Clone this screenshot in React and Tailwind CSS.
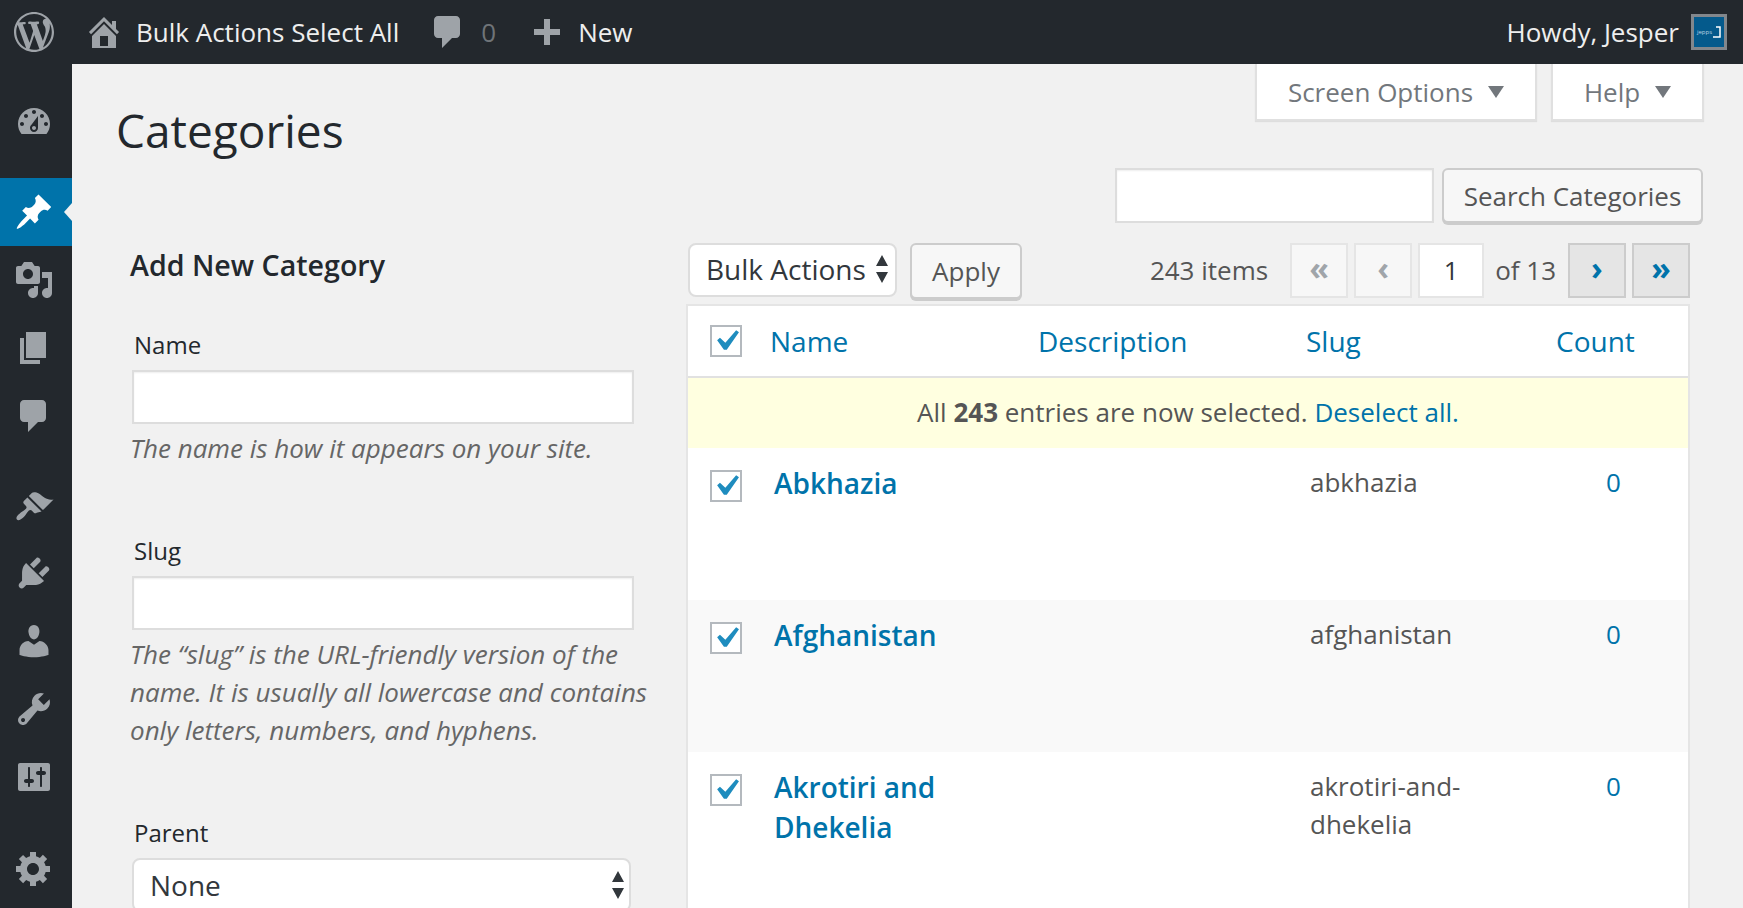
import React from 'react';

// dashicons paths, 20x20 viewBox
const P = {
  wp: 'M20 10c0-5.51-4.49-10-10-10C4.48 0 0 4.490 0 10c0 5.520 4.480 10 10 10 5.510 0 10-4.480 10-10zM7.780 15.370L4.370 6.220c.550-.020 1.170-.080 1.170-.080.500-.060.440-1.130-.060-1.110 0 0-1.450.110-2.370.110-.180 0-.370 0-.580-.010C4.120 2.690 6.890 1.040 10 1.040c2.320 0 4.430.870 6.030 2.340-.680-.110-1.650.390-1.650 1.580 0 .740.450 1.360.900 2.100.350.610.550 1.360.550 2.460 0 1.490-1.400 5-1.400 5l-3.030-8.370c.540-.020.820-.170.820-.170.500-.050.440-1.250-.060-1.220 0 0-1.440.120-2.380.120-.870 0-2.330-.120-2.330-.120-.500-.030-.560 1.200-.060 1.220l.920.080 1.260 3.410zM17.410 10c.240-.640.740-1.870.430-4.250.700 1.290 1.050 2.710 1.050 4.250 0 3.290-1.730 6.240-4.400 7.780.970-2.590 1.940-5.200 2.920-7.780zM6.100 18.090C3.120 16.650 1.110 13.530 1.110 10c0-1.300.230-2.480.720-3.590C3.250 10.300 4.670 14.200 6.100 18.090zm4.030-6.630l2.580 6.980c-.860.290-1.740.450-2.710.450-.790 0-1.570-.110-2.290-.330.810-2.380 1.620-4.740 2.420-7.100z',
  home: 'M16 8.500l1.530 1.530-1.060 1.060L10 4.620l-6.470 6.470-1.060-1.060L10 2.500l4 4v-2h2v4zm-6-2.460l6 5.990V18H4v-5.970zM12 17v-5H8v5h4z',
  comment: 'M5 2h9c1.100 0 2 .900 2 2v7c0 1.100-.900 2-2 2h-2l-5 5v-5H5c-1.100 0-2-.900-2-2V4c0-1.100.900-2 2-2z',
  plus: 'M16.500 8.500v3h-5v5h-3v-5h-5v-3h5v-5h3v5z',
  dashboard: 'M3.760 16h12.480c1.100-1.370 1.760-3.110 1.760-5 0-4.420-3.580-8-8-8s-8 3.580-8 8c0 1.890.660 3.630 1.760 5zM10 4c.550 0 1 .450 1 1s-.450 1-1 1-1-.450-1-1 .450-1 1-1zM6 6c.550 0 1 .450 1 1s-.450 1-1 1-1-.450-1-1 .450-1 1-1zm8 0c.550 0 1 .450 1 1s-.450 1-1 1-1-.450-1-1 .450-1 1-1zm-5.370 5.550L12 7v6c0 1.100-.900 2-2 2s-2-.900-2-2c0-.570.240-1.080.630-1.450zM4 10c.550 0 1 .450 1 1s-.450 1-1 1-1-.450-1-1 .450-1 1-1zm12 0c.550 0 1 .450 1 1s-.450 1-1 1-1-.450-1-1 .450-1 1-1zm-5 3c0-.550-.450-1-1-1s-1 .450-1 1 .450 1 1 1 1-.450 1-1z',
  pin: 'M10.440 3.020l1.820-1.820 6.360 6.350-1.830 1.820c-1.050-.680-2.480-.570-3.410.360l-.750.750c-.920.930-1.040 2.350-.350 3.410l-1.830 1.820-2.410-2.410-2.800 2.790c-.420.420-3.380 2.710-3.800 2.290s1.860-3.390 2.280-3.810l2.790-2.790L4.100 9.360l1.830-1.820c1.050.690 2.480.570 3.400-.360l.750-.750c.930-.920 1.050-2.350.360-3.410z',
  media: 'M13 11V4c0-.550-.450-1-1-1h-1.670L9 1H5L3.670 3H2c-.550 0-1 .450-1 1v7c0 .550.450 1 1 1h10c.550 0 1-.450 1-1zM7 4.500c1.380 0 2.500 1.120 2.500 2.500S8.380 9.500 7 9.500 4.500 8.380 4.500 7 5.620 4.500 7 4.500zM14 6h5v10.500c0 1.380-1.120 2.500-2.500 2.500S14 17.880 14 16.500s1.120-2.500 2.500-2.500c.170 0 .340.020.500.050V9h-3V6zm-4 8.050V13h2v3.500c0 1.380-1.120 2.500-2.500 2.500S7 17.880 7 16.500 8.120 14 9.500 14c.170 0 .340.020.500.050z',
  page: 'M6 15V2h10v13H6zm-1 1h8v2H3V5h2v11z',
  brush: 'M14.480 11.060L7.410 3.990l1.500-1.500c.500-.560 2.300-.470 3.510.320 1.210.800 1.430 1.280 2.910 2.100 1.180.640 2.450 1.260 4.450.850zm-.710.710L6.700 4.700 4.930 6.470c-.390.390-.390 1.020 0 1.410l1.060 1.060c.390.390.390 1.030 0 1.420-.600.600-1.430 1.110-2.210 1.690-.350.260-.700.530-1.010.840C1.430 13.710.840 15.180 1.470 15.810c.630.630 2.100.040 3.450-1.310.310-.310.580-.660.840-1.010.580-.780 1.090-1.610 1.690-2.210.390-.390 1.030-.390 1.420 0l1.060 1.060c.390.390 1.020.390 1.410 0z',
  plug: 'M13.110 4.360L9.870 7.600 8 5.730l3.240-3.240c.350-.340 1.050-.200 1.560.320.520.510.660 1.210.310 1.550zm-8 1.770l.910-1.120 9.010 9.010-1.190.840c-.710.710-2.630 1.160-3.820 1.160H6.140L4.900 17.260c-.590.590-1.540.590-2.120 0-.590-.580-.590-1.530 0-2.120l1.240-1.240v-3.880c0-1.130.400-3.190 1.090-3.890zm7.260 3.970l3.240-3.240c.340-.350 1.040-.210 1.550.310.520.510.660 1.210.310 1.550l-3.240 3.250z',
  user: 'M10 9.250c-2.270 0-2.730-3.440-2.730-3.440C7 4.020 7.820 2 9.970 2c2.160 0 2.980 2.020 2.710 3.810 0 0-.410 3.440-2.680 3.440zm0 2.570L12.720 10c2.390 0 4.520 2.330 4.520 4.530v2.490s-3.650 1.130-7.240 1.130c-3.650 0-7.240-1.130-7.240-1.130v-2.490c0-2.250 1.940-4.480 4.470-4.480z',
  wrench: 'M16.680 9.770c-1.340 1.340-3.300 1.670-4.950.990l-5.410 6.520c-.990.990-2.590.990-3.580 0s-.990-2.590 0-3.570l6.520-5.420c-.680-1.650-.350-3.610.990-4.950 1.280-1.280 3.120-1.620 4.720-1.060l-2.890 2.890 2.820 2.820 2.860-2.870c.530 1.580.180 3.390-1.080 4.650zM3.810 16.210c.400.390 1.040.390 1.430 0 .400-.400.400-1.040 0-1.430-.390-.400-1.030-.400-1.430 0-.390.390-.390 1.030 0 1.430z',
  sliders: 'M18 16V4c0-.550-.450-1-1-1H3c-.550 0-1 .450-1 1v12c0 .550.450 1 1 1h14c.550 0 1-.450 1-1zM8 11h1c.550 0 1 .450 1 1s-.450 1-1 1H8v1.500c0 .280-.220.500-.500.500s-.500-.220-.500-.500V13H6c-.550 0-1-.450-1-1s.450-1 1-1h1V5.500c0-.280.220-.500.500-.500s.500.220.500.500V11zm5-2h-1c-.550 0-1-.450-1-1s.450-1 1-1h1V5.500c0-.280.220-.500.500-.500s.500.220.500.500V7h1c.550 0 1 .450 1 1s-.450 1-1 1h-1v5.500c0 .280-.220.500-.500.500s-.500-.220-.500-.500V9z',
  gear: 'M18 12h-2.180c-.170.700-.440 1.350-.810 1.930l1.540 1.540-2.100 2.100-1.540-1.540c-.580.360-1.230.630-1.910.790V19H8v-2.180c-.680-.160-1.330-.430-1.910-.790l-1.540 1.540-2.120-2.120 1.540-1.540c-.360-.580-.630-1.230-.790-1.910H1V9.030h2.170c.160-.700.440-1.350.800-1.940L2.430 5.550l2.100-2.100 1.540 1.540c.580-.370 1.240-.640 1.930-.810V2h3v2.180c.680.160 1.330.430 1.910.790l1.540-1.540 2.120 2.120-1.540 1.540c.360.590.640 1.240.800 1.940H18V12zm-8.500 1.500c1.660 0 3-1.340 3-3s-1.340-3-3-3-3 1.340-3 3 1.340 3 3 3z',
  check: 'M14.830 4.890l1.340.940-5.810 8.380H9.020L5.780 9.670l1.340-1.250 2.570 2.400z',
};

const Icon = ({ d, className, viewBox = '0 0 20 20' }) => (
  <svg viewBox={viewBox} className={className} fill="currentColor">
    <path d={d} />
  </svg>
);

const Caret = () => (
  <svg viewBox="0 0 16 12" className="w-4 h-3" fill="#72777c">
    <path d="M0 0h16L8 12z" />
  </svg>
);

const UpDown = ({ className }) => (
  <svg viewBox="0 0 14 28" className={className} fill="#32373c">
    <path d="M7 0l6 11H1zM7 28L1 17h12z" />
  </svg>
);

const MenuItem = ({ d, active, viewBox, className = 'mb-0' }) => (
  <div className={`relative flex h-[68px] items-center justify-center pr-[5px] ${active ? 'bg-[#0073aa] text-white' : 'text-[#9ea3a8]'} ${className}`}>
    <Icon d={d} viewBox={viewBox} className="w-10 h-10" />
    {active && (
      <span className="absolute right-0 top-1/2 -mt-[9px] h-0 w-0 border-y-[9px] border-r-[8px] border-y-transparent border-r-[#f1f1f1]" />
    )}
  </div>
);

const Sidebar = () => (
  <div className="w-[72px] shrink-0 bg-[#23282d] pt-[23px]">
    <MenuItem d={P.dashboard} viewBox="0 -0.5 20 20" className="mb-[23px]" />
    <MenuItem d={P.pin} active />
    <MenuItem d={P.media} />
    <MenuItem d={P.page} />
    <MenuItem d={P.comment} className="mb-[21px]" />
    <MenuItem d={P.brush} viewBox="0 -1.5 20 20" />
    <MenuItem d={P.plug} />
    <MenuItem d={P.user} />
    <MenuItem d={P.wrench} />
    <MenuItem d={P.sliders} className="mb-[23px]" />
    <MenuItem d={P.gear} />
  </div>
);

const TopBar = () => (
  <div className="flex h-16 shrink-0 items-center bg-[#23282d] text-[26px] text-[#eeeeee]">
    <Icon d={P.wp} className="ml-[14px] w-10 h-10 text-[#9ea3a8]" />
    <Icon d={P.home} className="ml-[30px] w-10 h-10 text-[#9ea3a8]" />
    <span className="ml-[12px]">Bulk Actions Select All</span>
    <Icon d={P.comment} className="ml-[29px] w-10 h-10 text-[#9ea3a8]" />
    <span className="ml-[13px] text-[#6f7478]">0</span>
    <Icon d={P.plus} className="ml-[31px] w-10 h-10 text-[#9ea3a8]" />
    <span className="ml-[11px]">New</span>
    <span className="ml-auto">Howdy, Jesper</span>
    <div className="ml-[12px] mr-[16px] flex h-9 w-9 items-center justify-center gap-px border-[3px] border-[#82878c] bg-[#045a8c]">
      <span className="text-[6px] leading-none text-[#b9d3e3]">jepps</span>
      <svg viewBox="0 0 8 12" className="w-2 h-3" fill="none" stroke="#ffffff" strokeWidth="1.500">
        <path d="M3 1h4v10H0" />
      </svg>
    </div>
  </div>
);

const MetaTab = ({ label, className }) => (
  <div className={`flex h-[57px] items-center gap-[15px] border-x-2 border-b-2 border-[#e0e0e0] bg-white pt-px text-[26px] text-[#72777c] shadow-[0_1px_1px_rgba(0,0,0,0.08)] ${className}`}>
    {label}
    <Caret />
  </div>
);

const PageButton = ({ label, active }) => (
  <div className={`flex h-[55px] w-[58px] items-center justify-center border-2 pb-[6px] text-[32px] font-bold leading-none ${active ? 'border-[#cccccc] bg-[#e5e5e5] text-[#0073aa]' : 'border-[#e5e5e5] bg-[#f7f7f7] text-[#a0a5aa]'}`}>
    {label}
  </div>
);

const Check = ({ className = '' }) => (
  <span className={`flex h-8 w-8 items-center justify-center border-2 border-[#b4b9be] bg-white text-[#1e8cbe] ${className}`}>
    <Icon d={P.check} className="w-[42px] h-[42px] shrink-0" />
  </span>
);

const WideInput = ({ className = '' }) => (
  <input className={`block h-[54px] border-2 border-[#dddddd] bg-white shadow-[inset_0_1px_2px_rgba(0,0,0,0.07)] outline-none ${className}`} />
);

const Field = ({ label, className, children }) => (
  <div className={className}>
    <label className="block pl-[4px] text-[24px] leading-[36px] text-[#23282d]">{label}</label>
    {children}
  </div>
);

const Help = ({ children, className = '' }) => (
  <p className={`w-[530px] text-[26px] italic leading-[38px] text-[#666666] ${className}`}>{children}</p>
);

const rows = [
  { name: 'Abkhazia', slug: 'abkhazia', bg: 'bg-white', h: 'h-[152px]' },
  { name: 'Afghanistan', slug: 'afghanistan', bg: 'bg-[#f9f9f9]', h: 'h-[152px]' },
  { name: 'Akrotiri and Dhekelia', slug: 'akrotiri-and-dhekelia', bg: 'bg-white', h: 'h-[200px]' },
];

const CategoryRow = ({ name, slug, bg, h }) => (
  <div className={`flex ${h} ${bg}`}>
    <div className="w-[82px] shrink-0 pl-[22px] pt-[22px]"><Check /></div>
    <div className="w-[268px] shrink-0 pl-[4px] pr-[60px] pt-[15px] text-[28px] font-semibold leading-10 text-[#0073aa]">{name}</div>
    <div className="w-[268px] shrink-0" />
    <div className="w-[250px] shrink-0 pl-1 pr-[60px] pt-[15px] text-[26px] leading-[38px] text-[#555555]">{slug}</div>
    <div className="pl-[50px] pt-[15px] text-[26px] leading-[38px] text-[#0073aa]">0</div>
  </div>
);

const Table = () => (
  <div className="border-2 border-[#e5e5e5] bg-white">
    <div className="flex h-[72px] items-center border-b-2 border-[#e1e1e1] text-[28px] text-[#0073aa]">
      <div className="w-[82px] shrink-0 pl-[22px]"><Check /></div>
      <div className="w-[268px] shrink-0">Name</div>
      <div className="w-[268px] shrink-0">Description</div>
      <div className="w-[250px] shrink-0">Slug</div>
      <div>Count</div>
    </div>
    <div className="flex h-[70px] items-center justify-center bg-[#ffffe0] pb-[2px] text-[26px] text-[#555555]">
      <span>All <b className="font-bold">243</b> entries are now selected. <span className="text-[#0073aa]">Deselect all.</span></span>
    </div>
    {rows.map(r => <CategoryRow key={r.slug} {...r} />)}
  </div>
);

const TableNav = () => (
  <div className="flex h-[55px] items-start">
    <div className="ml-[2px] flex h-[54px] w-[209px] items-center justify-between rounded-lg border-2 border-[#dddddd] bg-white pb-[2px] pl-[16px] pr-[6px] text-[28px] text-[#32373c]">
      Bulk Actions
      <UpDown className="w-[14px] h-7" />
    </div>
    <div className="ml-[13px] flex h-[56px] w-[112px] items-center justify-center rounded-md border-2 border-[#cccccc] bg-[#f7f7f7] text-[26px] text-[#555555] shadow-[0_2px_0_#cccccc]">
      Apply
    </div>
    <span className="ml-auto self-center text-[26px] text-[#555555]">243 items</span>
    <div className="ml-[22px] flex items-center gap-[6px]">
      <PageButton label="«" />
      <PageButton label="‹" />
      <div className="flex h-[55px] w-[66px] items-center justify-center border-2 border-[#e5e5e5] bg-white text-[26px] text-[#32373c]">1</div>
      <span className="ml-[5px] mr-[6px] text-[26px] text-[#555555]">of 13</span>
      <PageButton label="›" active />
      <PageButton label="»" active />
    </div>
  </div>
);

const AddForm = () => (
  <div className="w-[569px] shrink-0 pl-[13px] pt-5">
    <h2 className="text-[28.6px] font-semibold leading-10 text-[#23282d]">Add New Category</h2>
    <Field label="Name" className="mt-[42px]">
      <WideInput className="ml-[2px] mt-[7px] w-[502px]" />
    </Field>
    <Help className="mt-[5px]">The name is how it appears on your site.</Help>
    <Field label="Slug" className="mt-[66px]">
      <WideInput className="ml-[2px] mt-[7px] w-[502px]" />
    </Field>
    <Help className="mt-[5px]">The “slug” is the URL-friendly version of the name. It is usually all lowercase and contains only letters, numbers, and hyphens.</Help>
    <Field label="Parent" className="mt-[66px]">
      <div className="relative ml-[2px] mt-[7px] w-[499px]">
        <select className="block h-[54px] w-full appearance-none rounded-lg border-2 border-[#dddddd] bg-white pl-[16px] text-[28px] text-[#32373c] outline-none">
          <option>None</option>
        </select>
        <UpDown className="absolute right-[6px] top-[13px] w-[14px] h-7" />
      </div>
    </Field>
  </div>
);

export default function App() {
  return (
    <div className="flex h-[908px] flex-col overflow-hidden font-['Open_Sans',sans-serif]">
      <TopBar />
      <div className="flex flex-1 min-h-0">
        <Sidebar />
        <div className="flex-1 bg-[#f1f1f1] pl-[45px]">
          <div className="flex h-[104px] items-start justify-between pr-[39px]">
            <h1 className="-ml-px mt-[35px] text-[46px] leading-[62px] text-[#23282d]">Categories</h1>
            <div className="flex gap-[14px]">
              <MetaTab label="Screen Options" className="w-[282px] justify-center" />
              <MetaTab label="Help" className="w-[153px] justify-center" />
            </div>
          </div>
          <div className="flex h-[57px] items-start justify-end gap-2 pr-[40px]">
            <input className="h-[55px] w-[319px] border-2 border-[#dddddd] bg-white shadow-[inset_0_1px_2px_rgba(0,0,0,0.07)] outline-none" />
            <div className="flex h-[55px] w-[261px] items-center justify-center rounded-md border-2 border-[#cccccc] bg-[#f7f7f7] pt-px text-[26px] text-[#555555] shadow-[0_2px_0_#cccccc]">
              Search Categories
            </div>
          </div>
          <div className="flex">
            <AddForm />
            <div className="w-[1004px] shrink-0 pt-[18px]">
              <TableNav />
              <div className="mt-[6px]"><Table /></div>
            </div>
          </div>
        </div>
      </div>
    </div>
  );
}
